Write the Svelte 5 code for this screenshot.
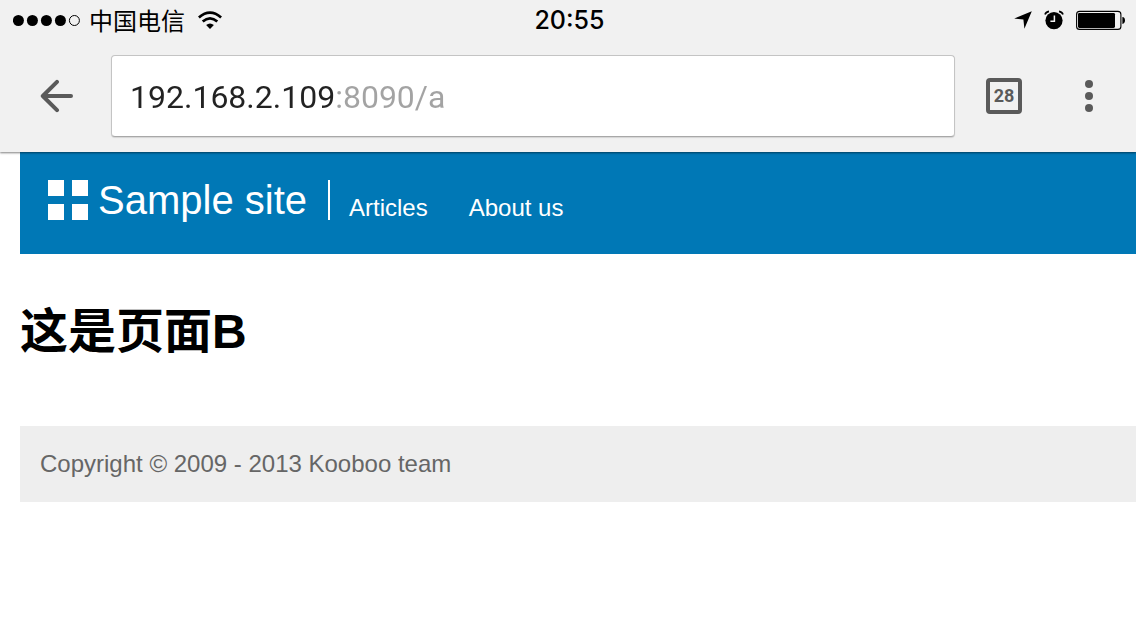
<script>
  let address = $state('192.168.2.109:8090/a');
  const signal = [true, true, true, true, false];
  const links = ['Articles', 'About us'];
</script>

<div class="browser">
  <div class="status">
    <div class="side">
      <svg class="signal" width="68" height="12" viewBox="0 0 68 12" aria-hidden="true">
        {#each signal as on, i}
          {#if on}
            <circle cx={5.4 + i * 14} cy="6.5" r="5.5" />
          {:else}
            <circle cx={5.4 + i * 14} cy="6.5" r="5" fill="none" stroke="#000" stroke-width="1" />
          {/if}
        {/each}
      </svg>
      <span class="carrier">中国电信</span>
      <svg class="wifi" width="24" height="18" viewBox="0 0 24 18" aria-hidden="true">
        <path d="M12 18 L8.1 14.1 Q12 10.9 15.9 14.1 Z" />
        <path d="M4.7 10.6 Q12 4.2 19.3 10.6" fill="none" stroke="#000" stroke-width="2.7" />
        <path d="M.9 6.5 Q12 -3.2 23.1 6.5" fill="none" stroke="#000" stroke-width="2.7" />
      </svg>
    </div>
    <time class="clock">20:55</time>
    <div class="side end">
      <svg width="18" height="18" viewBox="0 0 18 18" aria-hidden="true">
        <path d="M17.8 .2 L10.4 17.8 L9.4 8.6 L.2 7.6 Z" />
      </svg>
      <svg class="alarm" width="20" height="20" viewBox="0 0 20 20" aria-hidden="true">
        <circle cx="10" cy="10.6" r="8.6" />
        <path d="M1 4.6 Q1.8 2 5 1.4 M19 4.6 Q18.2 2 15 1.4" fill="none" stroke="#000" stroke-width="1.6" />
        <path d="M10.4 5.4 V11.2 H6.4" fill="none" stroke="#f1f1f1" stroke-width="1.5" />
      </svg>
      <svg width="50" height="20" viewBox="0 0 50 20" aria-hidden="true">
        <rect x=".6" y="1.4" width="44.3" height="18" rx="3" fill="none" stroke="#000" stroke-width="1.1" />
        <rect x="2" y="2.9" width="37" height="15" rx="1.4" />
        <path d="M46.4 7.1 Q49 7.5 49 10.5 Q49 13.5 46.4 13.9 Z" />
      </svg>
    </div>
  </div>

  <div class="toolbar">
    <button class="tool back" aria-label="Back">
      <svg width="34" height="34" viewBox="0 0 34 34" aria-hidden="true">
        <path d="M31 17 H3 M17 2.8 L2.8 17 L17 31.2" />
      </svg>
    </button>
    <div class="field">
      <input type="text" aria-label="Address" spellcheck="false" bind:value={address} />
    </div>
    <button class="tool tabs" aria-label="Open tabs: 28"><span>28</span></button>
    <button class="tool menu" aria-label="Menu">
      <svg width="8" height="32" viewBox="0 0 8 32" aria-hidden="true">
        <circle cx="4" cy="4" r="4" /><circle cx="4" cy="16" r="4" /><circle cx="4" cy="28" r="4" />
      </svg>
    </button>
  </div>
</div>

<div class="page">
  <header>
    <a class="brand" href="#home">
      <svg width="40" height="40" viewBox="0 0 40 40" aria-hidden="true">
        <path d="M0 0H16V16H0Z M24 0H40V16H24Z M0 24H16V40H0Z M24 24H40V40H24Z" />
      </svg>
      <span>Sample site</span>
    </a>
    <nav>
      {#each links as link}
        <a href="#{link}">{link}</a>
      {/each}
    </nav>
  </header>
  <main><h1>这是页面B</h1></main>
  <footer>Copyright © 2009 - 2013 Kooboo team</footer>
</div>

<style>
  :global(body) {
    margin: 0;
    background: #fff;
    font-family: "Liberation Sans", "Noto Sans CJK SC", sans-serif;
  }
  svg { display: block; flex: none; }
  .browser {
    position: relative;
    background: #f1f1f1;
    box-shadow: 0 1px 2px rgba(0, 0, 0, 0.5);
  }
  .status {
    display: grid;
    grid-template-columns: 1fr auto 1fr;
    align-items: center;
    height: 40px;
    padding: 0 10px 0 13px;
    color: #000;
  }
  .side { display: flex; align-items: center; }
  .end { justify-content: flex-end; gap: 12px; }
  .carrier {
    margin: 0 13px 0 8px;
    font: 24px/38px "Noto Sans CJK SC", sans-serif;
  }
  .clock { font: 500 25px/40px Inter, sans-serif; }
  .toolbar {
    display: flex;
    align-items: center;
    padding: 15px 0;
  }
  .tool {
    box-sizing: border-box;
    display: flex;
    align-items: center;
    justify-content: center;
    flex: none;
    height: 82px;
    padding: 0;
    border: 0;
    background: none;
    color: #5a5a5a;
    cursor: pointer;
  }
  .back { width: 111px; padding-left: 3px; }
  .back svg {
    fill: none;
    stroke: #5a5a5a;
    stroke-width: 4;
    stroke-linecap: round;
    stroke-linejoin: round;
  }
  .tabs { width: 98px; }
  .tabs span {
    box-sizing: border-box;
    width: 36px;
    height: 36px;
    border: 4px solid #5a5a5a;
    border-radius: 4px;
    font: 700 18px/28px Roboto, sans-serif;
  }
  .menu { width: 72px; margin-right: 11px; }
  .menu svg { fill: #5a5a5a; }
  .field {
    box-sizing: border-box;
    flex: 1;
    min-width: 0;
    height: 82px;
    border: 1px solid #c4c4c4;
    border-bottom-color: #a8a8a8;
    border-radius: 4px;
    background: #fff;
    box-shadow: 0 1px 1px rgba(0, 0, 0, 0.12);
  }
  input {
    box-sizing: border-box;
    width: 100%;
    height: 80px;
    padding: 2px 18px 0;
    border: 0;
    outline: 0;
    background: linear-gradient(to right, #222 222px, #a3a3a3 222px);
    -webkit-background-clip: text;
    background-clip: text;
    color: transparent;
    caret-color: #222;
    font: 32px Roboto, sans-serif;
  }
  .page { padding-left: 20px; }
  header {
    display: flex;
    align-items: flex-start;
    padding: 28px;
    min-height: 46px;
    background: #0078b6;
  }
  header a { color: #fff; text-decoration: none; }
  .brand {
    display: flex;
    gap: 10px;
    height: 40px;
    padding-right: 21px;
    border-right: 2px solid #fff;
    font-size: 40px;
    line-height: 40px;
  }
  .brand svg { fill: #fff; }
  nav {
    display: flex;
    gap: 41px;
    padding: 14px 0 0 19px;
    font-size: 24px;
    line-height: 28px;
  }
  h1 {
    margin: 0;
    padding: 38px 0 54px;
    color: #000;
    font-size: 48px;
    line-height: 80px;
  }
  footer {
    padding: 24px 20px;
    background: #eee;
    color: #666;
    font-size: 24px;
    line-height: 28px;
  }
</style>
